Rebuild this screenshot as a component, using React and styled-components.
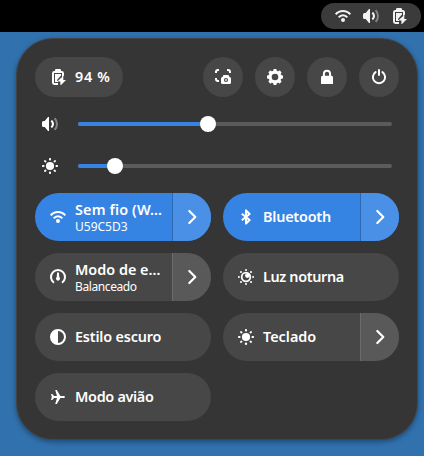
import React from "react";
import styled, { createGlobalStyle } from "styled-components";

const GlobalStyle = createGlobalStyle`
  * { box-sizing: border-box; }
  html, body { margin: 0; height: 100%; overflow: hidden; }
  body {
    background: #3071ae;
    color: #fff;
    font-family: "Noto Sans", "Open Sans", sans-serif;
  }
  button { font: inherit; color: inherit; border: 0; padding: 0; margin: 0; }
`;

const Screen = styled.div`
  width: 424px;
  height: 456px;
  display: flex;
  flex-direction: column;
  background: #3071ae;
`;

const TopBar = styled.header`
  height: 32px;
  flex: none;
  display: flex;
  justify-content: flex-end;
  align-items: center;
  padding-right: 3px;
  background: #000;
`;

const StatusPill = styled.div`
  width: 100px;
  height: 26px;
  display: flex;
  align-items: center;
  gap: 12px;
  padding-left: 14px;
  border-radius: 13px;
  background: #3b3b3b;
  color: #f2f2f2;
`;

const Panel = styled.main`
  width: 402px;
  height: 402px;
  margin: 6px 0 0 16px;
  padding: 18px;
  border: 1px solid #444;
  border-radius: 37px;
  background: #353535;
  box-shadow: 0 2px 5px rgba(0, 0, 0, 0.35);
`;

const Header = styled.div`
  display: flex;
  gap: 12px;
`;

const BatteryButton = styled.button`
  width: 88px;
  height: 40px;
  margin-right: auto;
  display: flex;
  align-items: center;
  gap: 9px;
  padding-left: 15px;
  border-radius: 20px;
  background: #474747;
`;

const RoundButton = styled.button`
  width: 40px;
  height: 40px;
  display: flex;
  align-items: center;
  justify-content: center;
  border-radius: 50%;
  background: #474747;
`;

const Label = styled.span`
  display: block;
  font-size: 14.4px;
  line-height: 18px;
  font-weight: 600;
  white-space: nowrap;
  letter-spacing: ${(p) => p.$track || 0}px;
`;

const Detail = styled.span`
  display: block;
  font-size: 12px;
  line-height: 15px;
  font-weight: 400;
  white-space: nowrap;
  letter-spacing: ${(p) => p.$track || 0}px;
`;

const Sliders = styled.div`
  display: grid;
  gap: 18px;
  margin: 15px 0;
`;

const SliderRow = styled.div`
  height: 24px;
  display: flex;
  align-items: center;
  gap: 20px;
  padding: 0 7px;
`;

const Track = styled.div`
  flex: 1;
  height: 4px;
  display: flex;
  align-items: center;
  border-radius: 2px;
  background: #5b5b5b;
`;

const Fill = styled.div`
  width: ${(p) => p.$width}px;
  height: 4px;
  flex: none;
  border-radius: 2px;
  background: #3584e4;
`;

const Knob = styled.div`
  width: 16px;
  height: 16px;
  flex: none;
  margin-left: -8px;
  border-radius: 50%;
  background: #fff;
`;

const Tiles = styled.div`
  display: grid;
  grid-template-columns: 176px 176px;
  grid-auto-rows: 48px;
  gap: 12px;
`;

const TileShell = styled.div`
  display: flex;
  overflow: hidden;
  border-radius: 24px;
  background: ${(p) => (p.$active ? "#3584e4" : "#474747")};
`;

const TileButton = styled.button`
  flex: 1;
  min-width: 0;
  display: flex;
  align-items: center;
  gap: 9px;
  padding-left: 15px;
  text-align: left;
  background: transparent;
`;

const MenuButton = styled.button`
  width: 39px;
  flex: none;
  display: flex;
  align-items: center;
  justify-content: center;
  border-left: 1px solid ${(p) => (p.$active ? "#2d69b0" : "#6b6b6b")};
  background: ${(p) => (p.$active ? "#4a90e7" : "#595959")};
`;

const Glyph = styled.svg`
  width: 16px;
  height: 16px;
  flex: none;
  display: block;
  overflow: visible;
`;

const Icon = ({ children }) => (
  <Glyph viewBox="0 0 16 16" fill="none" stroke="none" aria-hidden="true">
    {children}
  </Glyph>
);

const Wifi = () => (
  <Icon>
    <g stroke="currentColor" strokeWidth="2">
      <path d="M.7 6.3a9.5 9.5 0 0 1 14.6 0" />
      <path d="M3.7 9.3a5.4 5.4 0 0 1 8.6 0" />
    </g>
    <circle cx="8" cy="12" r="2" fill="currentColor" />
  </Icon>
);

const Volume = () => (
  <Icon>
    <path d="M7 1v14H6L2.7 11H1.5Q0 11 0 9.5v-3Q0 5 1.5 5h1.2L6 1z" fill="currentColor" />
    <path d="M9.3 4.6Q11 6 11 8t-1.7 3.4" stroke="currentColor" strokeWidth="2.1" />
    <path d="M12.6 2.2Q15 4.5 15 8t-2.4 5.8" stroke="currentColor" strokeWidth="2" opacity=".4" />
  </Icon>
);

const Battery = () => (
  <Icon>
    <path d="M5 2V1.2Q5 0 6.2 0h3.6Q11 0 11 1.2V2h.6Q14 2 14 4.4V6.4l-2 2V4H4v10h4v2H4.4Q2 16 2 13.6V4.4Q2 2 4.4 2z" fill="currentColor" />
    <path d="M5 5h6v1.5L7.2 10.8V12H8v1H5z" fill="currentColor" />
    <path d="M13.3 7v4H16l-5 5h-.6v-3.6H8.2v-.9z" fill="currentColor" />
  </Icon>
);

const Screenshot = () => (
  <Icon>
    <path d="M1 4V3q0-2 2-2h1M12 1h1q2 0 2 2v1M1 9v1q0 2 2 2h1" stroke="currentColor" strokeWidth="2" />
    <path d="M7.5 8 8.5 6h5l1 2q1.5 0 1.5 1.5v4q0 1.5-1.5 1.5h-7Q6 15 6 13.5v-4Q6 8 7.5 8zM11 8.9a2.1 2.1 0 1 0 0 4.2A2.1 2.1 0 0 0 11 8.9z" fill="currentColor" fillRule="evenodd" />
    <circle cx="11" cy="11" r=".9" fill="currentColor" />
  </Icon>
);

const EIGHTHS = [0, 45, 90, 135, 180, 225, 270, 315];

const Gear = () => (
  <Icon>
    <circle cx="8" cy="8" r="4.9" stroke="currentColor" strokeWidth="3.2" />
    {EIGHTHS.map((a) => (
      <rect key={a} x="6.3" y="0" width="3.4" height="3" rx=".9" fill="currentColor" transform={`rotate(${a} 8 8)`} />
    ))}
  </Icon>
);

const Lock = () => (
  <Icon>
    <path d="M4.9 8V5q0-3.3 3.1-3.3T11.1 5v3" stroke="currentColor" strokeWidth="2" />
    <path d="M3.5 6.7h9q1.5 0 1.5 1.5V15H2V8.2q0-1.5 1.5-1.5z" fill="currentColor" />
  </Icon>
);

const Power = () => (
  <Icon>
    <path d="M4.6 3.1a6.1 6.1 0 1 0 6.8 0" stroke="currentColor" strokeWidth="2" strokeLinecap="round" />
    <path d="M8 1v5" stroke="currentColor" strokeWidth="2" strokeLinecap="round" />
  </Icon>
);

const Sun = () => (
  <Icon>
    <circle cx="8" cy="8" r="4.1" fill="currentColor" />
    {EIGHTHS.map((a) => (
      <rect key={a} x="7" y="0" width="2" height="2.5" rx=".7" fill="currentColor" transform={`rotate(${a} 8 8)`} />
    ))}
  </Icon>
);

const NightLight = () => (
  <Icon>
    <circle cx="8" cy="8" r="4.3" stroke="currentColor" strokeWidth="1.8" />
    <circle cx="9.4" cy="6.6" r="2.3" fill="currentColor" />
    {EIGHTHS.map((a) => (
      <circle key={a} cx="8" cy=".9" r="1" fill="currentColor" transform={`rotate(${a} 8 8)`} />
    ))}
  </Icon>
);

const PowerMode = () => (
  <Icon>
    <path d="M4 13.8a7 7 0 1 1 8 0" stroke="currentColor" strokeWidth="2" />
    <path d="M7.1 3.4h1.8l.4 4.6a2 2 0 1 1-2.6 0z" fill="currentColor" />
  </Icon>
);

const Bluetooth = () => (
  <Icon>
    <path d="m3.8 4.7 7.8 6.3L8 14.6V1.4L11.6 5l-7.8 6.3" stroke="currentColor" strokeWidth="2.1" strokeLinejoin="round" />
  </Icon>
);

const DarkStyle = () => (
  <Icon>
    <circle cx="8" cy="8" r="7" stroke="currentColor" strokeWidth="2" />
    <path d="M8 1a7 7 0 0 0 0 14z" fill="currentColor" />
  </Icon>
);

const Airplane = () => (
  <Icon>
    <path d="M1 5h1.3l1.8 2H7L5.2 1h1.6l3.6 6h3.1q1.5.1 1.5 1t-1.5 1h-3.1l-3.6 6H5.2L7 9H4.1l-1.8 2H1l.8-3z" fill="currentColor" />
  </Icon>
);

const Chevron = () => (
  <Icon>
    <path d="m5.3 2 6 6-6 6" stroke="currentColor" strokeWidth="2.2" strokeLinecap="round" strokeLinejoin="round" />
  </Icon>
);

const Tile = ({ icon, label, detail, active, menu, track, detailTrack }) => (
  <TileShell $active={active}>
    <TileButton>
      {icon}
      <span>
        <Label $track={track}>{label}</Label>
        {detail && <Detail $track={detailTrack}>{detail}</Detail>}
      </span>
    </TileButton>
    {menu && (
      <MenuButton $active={active}>
        <Chevron />
      </MenuButton>
    )}
  </TileShell>
);

export default function App() {
  return (
    <Screen>
      <GlobalStyle />
      <TopBar>
        <StatusPill>
          <Wifi />
          <Volume />
          <Battery />
        </StatusPill>
      </TopBar>
      <Panel>
        <Header>
          <BatteryButton>
            <Battery />
            <Label $track={0.7}>94 %</Label>
          </BatteryButton>
          <RoundButton><Screenshot /></RoundButton>
          <RoundButton><Gear /></RoundButton>
          <RoundButton><Lock /></RoundButton>
          <RoundButton><Power /></RoundButton>
        </Header>
        <Sliders>
          <SliderRow>
            <Volume />
            <Track><Fill $width={130} /><Knob /></Track>
          </SliderRow>
          <SliderRow>
            <Sun />
            <Track><Fill $width={37} /><Knob /></Track>
          </SliderRow>
        </Sliders>
        <Tiles>
          <Tile active menu icon={<Wifi />} label="Sem fio (W…" track={0.15} detail="U59C5D3" />
          <Tile active menu icon={<Bluetooth />} label="Bluetooth" track={-0.2} />
          <Tile menu icon={<PowerMode />} label="Modo de e…" detail="Balanceado" detailTrack={-0.4} />
          <Tile icon={<NightLight />} label="Luz noturna" track={-0.35} />
          <Tile icon={<DarkStyle />} label="Estilo escuro" track={-0.17} />
          <Tile menu icon={<Sun />} label="Teclado" />
          <Tile icon={<Airplane />} label="Modo avião" track={-0.3} />
        </Tiles>
      </Panel>
    </Screen>
  );
}
